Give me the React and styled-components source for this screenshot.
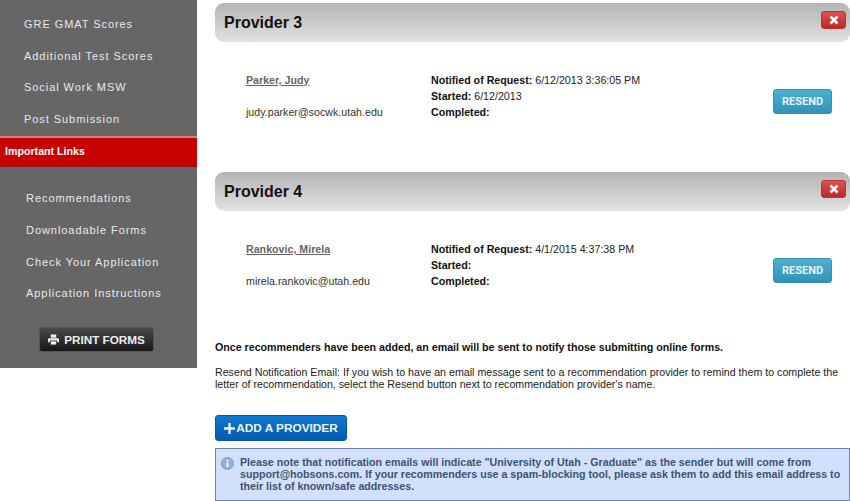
import styled, { createGlobalStyle } from "styled-components";

const GlobalStyle = createGlobalStyle`
html, body {
  margin: 0;
  padding: 0;
  background: #fff;
  overflow: hidden;
  font-family: "Liberation Sans", Arial, sans-serif;
}
`;

const Page = styled.div`
display: flex;
align-items: flex-start;
width: 850px;
height: 501px;
overflow: hidden;
`;

const Sidebar = styled.nav`
width: 197px;
height: 368px;
flex-shrink: 0;
background: #666;
display: flex;
flex-direction: column;
padding-top: 9px;
box-sizing: border-box;
`;

const NavLink = styled.a`
display: block;
height: 31.7px;
line-height: 31.7px;
padding-left: ${(props) => props.$indent}px;
color: #e8e8e8;
font-size: 11px;
letter-spacing: 0.94px;
white-space: nowrap;
`;

const NavHeading = styled.div`
height: 31px;
margin: 0 0 16.6px;
box-sizing: border-box;
background: #c80000;
border-top: 2px solid #d98080;
border-bottom: 1px solid #8f1010;
padding-left: 5px;
line-height: 27px;
color: #fff;
font-size: 10.67px;
font-weight: bold;
`;

const PrintButton = styled.button`
align-self: flex-start;
margin: 16.5px 0 0 39px;
width: 115px;
height: 25px;
display: flex;
align-items: center;
justify-content: center;
gap: 5px;
padding: 0;
border: 1px solid #555;
border-radius: 3px;
background: linear-gradient(#4a4a4a, #161616);
color: #eee;
font-family: inherit;
font-size: 11.7px;
font-weight: bold;
`;

const Main = styled.main`
margin-left: 18px;
width: 635px;
padding-top: 3px;
`;

const Provider = styled.section`
height: 169px;
`;

const ProviderHeader = styled.header`
height: 39px;
box-sizing: border-box;
padding: 0 4px 0 9px;
display: flex;
align-items: center;
justify-content: space-between;
border-radius: 9px;
background: linear-gradient(#b4b4b4, #e2e2e2);
`;

const ProviderTitle = styled.h2`
margin: 0;
font-size: 16px;
font-weight: bold;
color: #111;
`;

const RemoveButton = styled.button`
width: 25px;
height: 18px;
margin-top: -6px;
padding: 0;
display: flex;
align-items: center;
justify-content: center;
border: 1px solid #b33;
border-radius: 3px;
background: linear-gradient(#e05050, #bb2a2a);
`;

const ProviderBody = styled.div`
display: grid;
grid-template-columns: 185px 342px 59px;
padding: 30px 0 0 31px;
`;

const Contact = styled.div`
display: flex;
flex-direction: column;
justify-content: space-between;
height: 48px;
font-size: 10.67px;
line-height: 16px;
color: #333;
`;

const ContactName = styled.a`
color: #666;
font-weight: bold;
text-decoration: underline;
`;

const Details = styled.div`
font-size: 10.67px;
line-height: 16px;
color: #222;
b {
  color: #111;
}
`;

const ResendButton = styled.button`
align-self: start;
width: 59px;
height: 25px;
margin-top: 17px;
padding: 0;
border: 1px solid #3a8fae;
border-radius: 3px;
background: linear-gradient(#4fb0cf, #2f93b8);
color: #e4f3f8;
font-family: Roboto, sans-serif;
font-size: 11px;
font-weight: bold;
`;

const Lead = styled.p`
margin: 0;
font-size: 10.67px;
font-weight: bold;
line-height: 13px;
color: #111;
`;

const Paragraph = styled.p`
margin: 12px 0 0;
width: 632px;
font-size: 10.67px;
line-height: 12px;
color: #222;
`;

const AddButton = styled.button`
display: flex;
align-items: center;
justify-content: center;
gap: 1px;
width: 132px;
height: 26px;
margin-top: 25px;
padding: 0;
border: 1px solid #0a55a0;
border-radius: 3px;
background: linear-gradient(#0f78d2, #0659ae);
color: #eaf3fb;
font-family: inherit;
font-size: 11.8px;
font-weight: bold;
`;

const Notice = styled.div`
display: flex;
gap: 6px;
margin-top: 7px;
height: 53px;
box-sizing: border-box;
padding: 7px 8px 0 5px;
border: 1px solid #6d84ad;
background: #d2e0fb;
color: #3d5378;
font-size: 10.67px;
font-weight: bold;
line-height: 12px;
`;

const NoticeIcon = styled.svg`
flex-shrink: 0;
width: 13px;
height: 13px;
margin-top: 1px;
`;

const topLinks = ["GRE GMAT Scores", "Additional Test Scores", "Social Work MSW", "Post Submission"];
const bottomLinks = ["Recommendations", "Downloadable Forms", "Check Your Application", "Application Instructions"];

const providers = [
  {
    title: "Provider 3",
    name: "Parker, Judy",
    email: "judy.parker@socwk.utah.edu",
    notified: "6/12/2013 3:36:05 PM",
    started: "6/12/2013",
  },
  {
    title: "Provider 4",
    name: "Rankovic, Mirela",
    email: "mirela.rankovic@utah.edu",
    notified: "4/1/2015 4:37:38 PM",
    started: "",
  },
];

function PrinterIcon() {
  return (
    <svg width="11" height="11" viewBox="0 0 12 12" fill="#eee">
      <path d="M3 0.5h6v3.5H3z" />
      <path d="M1 4.5h10a1 1 0 0 1 1 1V9h-2V7H2v2H0V5.5a1 1 0 0 1 1-1z" />
      <path d="M3 8h6v3.5H3z" />
    </svg>
  );
}

function CloseIcon() {
  return (
    <svg width="10" height="10" viewBox="0 0 10 10">
      <path d="M1.5 1.5l7 7M8.5 1.5l-7 7" stroke="#fff" strokeWidth="2.6" />
    </svg>
  );
}

function PlusIcon() {
  return (
    <svg width="11" height="11" viewBox="0 0 10 10" fill="#eaf3fb">
      <path d="M3.9 0h2.2v3.9H10v2.2H6.1V10H3.9V6.1H0V3.9h3.9z" />
    </svg>
  );
}

export default function App() {
  return (
    <Page>
      <GlobalStyle />
      <Sidebar>
        {topLinks.map((link) => (
          <NavLink key={link} $indent={24}>{link}</NavLink>
        ))}
        <NavHeading>Important Links</NavHeading>
        {bottomLinks.map((link) => (
          <NavLink key={link} $indent={26}>{link}</NavLink>
        ))}
        <PrintButton>
          <PrinterIcon />
          PRINT FORMS
        </PrintButton>
      </Sidebar>
      <Main>
        {providers.map((provider) => (
          <Provider key={provider.title}>
            <ProviderHeader>
              <ProviderTitle>{provider.title}</ProviderTitle>
              <RemoveButton><CloseIcon /></RemoveButton>
            </ProviderHeader>
            <ProviderBody>
              <Contact>
                <ContactName>{provider.name}</ContactName>
                <span>{provider.email}</span>
              </Contact>
              <Details>
                <div><b>Notified of Request:</b> {provider.notified}</div>
                <div><b>Started:</b> {provider.started}</div>
                <div><b>Completed:</b></div>
              </Details>
              <ResendButton>RESEND</ResendButton>
            </ProviderBody>
          </Provider>
        ))}
        <Lead>Once recommenders have been added, an email will be sent to notify those submitting online forms.</Lead>
        <Paragraph>
          Resend Notification Email: If you wish to have an email message sent to a recommendation provider to remind them to complete the letter of recommendation, select the Resend button next to recommendation provider's name.
        </Paragraph>
        <AddButton><PlusIcon />ADD A PROVIDER</AddButton>
        <Notice>
          <NoticeIcon viewBox="0 0 14 14">
            <circle cx="7" cy="7" r="6.5" fill="#8fb0dc" stroke="#7a9ccc" />
            <rect x="6" y="6" width="2" height="5" fill="#fff" />
            <rect x="6" y="3" width="2" height="2" fill="#fff" />
          </NoticeIcon>
          <div>
            Please note that notification emails will indicate "University of Utah - Graduate" as the sender but will come from support@hobsons.com. If your recommenders use a spam-blocking tool, please ask them to add this email address to their list of known/safe addresses.
          </div>
        </Notice>
      </Main>
    </Page>
  );
}
